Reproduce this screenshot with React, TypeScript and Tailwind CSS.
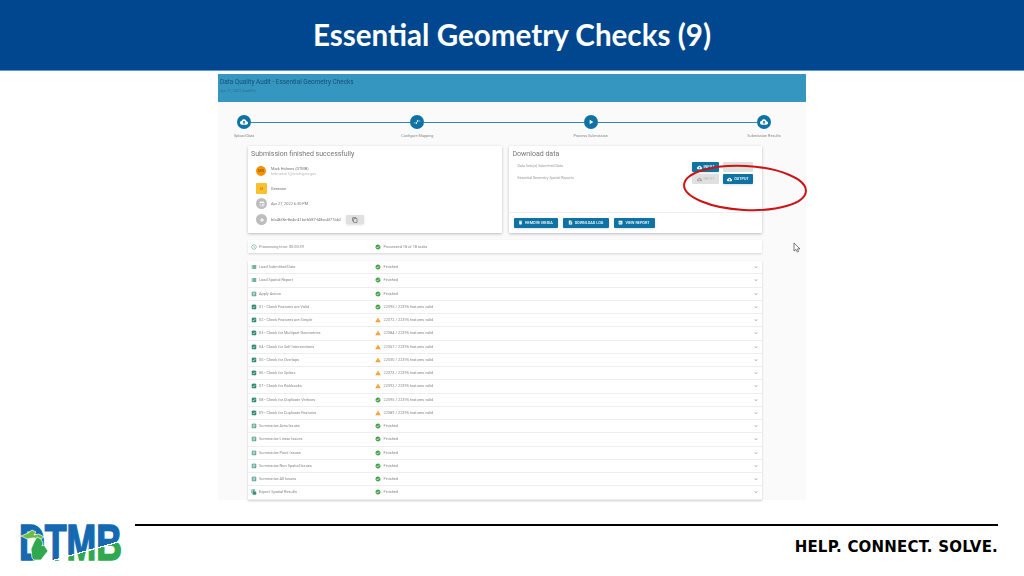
import type { ReactNode } from "react";
import {
  MdAssignment,
  MdAssignmentTurnedIn,
  MdCheckCircle,
  MdCloudUpload,
  MdContentCopy,
  MdDelete,
  MdDescription,
  MdEvent,
  MdExpandMore,
  MdFileCopy,
  MdPlayArrow,
  MdSchedule,
  MdTag,
  MdViewList,
  MdWarning,
  MdCompareArrows,
  MdAssessment,
} from "react-icons/md";

type Task = { name: string; kind: "load" | "check" | "sum" | "export"; status: string; warn?: boolean };

const tasks: Task[] = [
  { name: "Load Submitted Data", kind: "load", status: "Finished" },
  { name: "Load Spatial Report", kind: "load", status: "Finished" },
  { name: "Apply Action", kind: "sum", status: "Finished" },
  { name: "01 - Check Features are Valid", kind: "check", status: "22395 / 22395 features valid" },
  { name: "02 - Check Features are Simple", kind: "check", status: "22372 / 22395 features valid", warn: true },
  { name: "03 - Check for Multipart Geometries", kind: "check", status: "22384 / 22395 features valid", warn: true },
  { name: "04 - Check for Self Intersections", kind: "check", status: "22357 / 22395 features valid", warn: true },
  { name: "05 - Check for Overlaps", kind: "check", status: "22330 / 22395 features valid", warn: true },
  { name: "06 - Check for Spikes", kind: "check", status: "22373 / 22395 features valid", warn: true },
  { name: "07 - Check for Kickbacks", kind: "check", status: "22392 / 22395 features valid", warn: true },
  { name: "08 - Check for Duplicate Vertices", kind: "check", status: "22395 / 22395 features valid" },
  { name: "09 - Check for Duplicate Features", kind: "check", status: "22389 / 22395 features valid", warn: true },
  { name: "Summarize Area Issues", kind: "sum", status: "Finished" },
  { name: "Summarize Linear Issues", kind: "sum", status: "Finished" },
  { name: "Summarize Point Issues", kind: "sum", status: "Finished" },
  { name: "Summarize Non Spatial Issues", kind: "sum", status: "Finished" },
  { name: "Summarize All Issues", kind: "sum", status: "Finished" },
  { name: "Export Spatial Results", kind: "export", status: "Finished" },
];

const Step = ({ icon, label }: { icon: ReactNode; label: string }) => (
  <div className="flex w-[14px] shrink-0 flex-col items-center">
    <div className="flex h-[14px] w-[14px] items-center justify-center rounded-full bg-[#0e73a3] text-white">{icon}</div>
    <span className="mt-[4px] whitespace-nowrap text-[3.8px] leading-[6px] text-[#888]">{label}</span>
  </div>
);

const Line = () => <div className="mt-[6.5px] h-[1px] flex-1 bg-[#2a8ab5]" />;

const InfoRow = ({ icon, children, className }: { icon: ReactNode; children: ReactNode; className: string }) => (
  <div className={`flex items-center gap-[1px] pl-[8px] ${className}`}>
    <div className="w-[14px] shrink-0">{icon}</div>
    {children}
  </div>
);

const Btn = ({ icon, label, w }: { icon: ReactNode; label: string; w: string }) => (
  <div className={`flex h-[10px] items-center justify-center gap-[2px] rounded-[1px] bg-[#0e73a3] text-[3.8px] font-medium text-white shadow-sm ${w}`}>
    {icon}
    <span>{label}</span>
  </div>
);

const TaskIcon = ({ kind }: { kind: Task["kind"] }) => {
  if (kind === "load") return <MdViewList className="text-[6px] text-[#4a9a86]" />;
  if (kind === "check") return <MdAssignmentTurnedIn className="text-[6px] text-[#2f8a72]" />;
  if (kind === "export") return <MdFileCopy className="text-[6px] text-[#3f8f7c]" />;
  return <MdAssignment className="text-[6px] text-[#62a897]" />;
};

const Logo = () => (
  <svg width="104" height="40" viewBox="0 0 104 40" className="shrink-0 overflow-visible">
    <defs>
      {/* blue above the swoosh, green below; the stops are hard edges */}
      <linearGradient id="logoFill" gradientUnits="userSpaceOnUse" x1="42" y1="1.5" x2="44.1" y2="11.88">
        <stop offset="0" stopColor="#1469b0" />
        <stop offset="0" stopColor="#ffffff" />
        <stop offset="0.12" stopColor="#ffffff" />
        <stop offset="0.12" stopColor="#2fa84f" />
      </linearGradient>
    </defs>
    <text
      transform="translate(0 37.5) scale(0.713 1)"
      fontFamily="'Liberation Sans', sans-serif"
      fontWeight="700"
      fontSize="50"
      strokeWidth="1.6"
      fill="url(#logoFill)"
      stroke="url(#logoFill)"
    >
      DTMB
    </text>
    <path d="M2 14L9 11L13 8L17 10L15 13L20 12L25 15L22 17L14 16L8 17Z" fill="#6cbd45" stroke="#fff" strokeWidth="0.7" />
    <path d="M13 36L12 27L15 20L18 15L22 17L24 21L23 24L25 23L29 29L25 34L22 38L15 38Z" fill="#2fa84f" stroke="#fff" strokeWidth="0.7" />
  </svg>
);

export default function App() {
  return (
    <div className="relative flex h-[576px] w-[1024px] flex-col overflow-hidden bg-white font-['Roboto',sans-serif]">
      <header className="flex h-[71px] shrink-0 items-center justify-center border-b border-[#5b9bd5] bg-[#00478f]">
        <h1 className="font-['Lato',sans-serif] text-[29.6px] font-bold text-white">Essential Geometry Checks (9)</h1>
      </header>

      {/* pasted screenshot of the app */}
      <div className="relative ml-[218px] mt-[3px] h-[426px] w-[588px] shrink-0 bg-[#fafafa] blur-[0.4px]">
        <div className="h-[28px] bg-[#3596bf] pl-[2px] pt-[4px]">
          <p className="text-[6.4px] leading-[8px] text-[#14507a]">Data Quality Audit - Essential Geometry Checks</p>
          <p className="mt-[2px] text-[3.8px] leading-[5px] text-[#2a7098]">Apr 27, 2022 AuditFix</p>
        </div>

        <div className="flex pl-[19px] pr-[35px] pt-[13px]">
          <Step icon={<MdCloudUpload className="text-[8px]" />} label="Upload Data" />
          <Line />
          <Step icon={<MdCompareArrows className="text-[8px]" />} label="Configure Mapping" />
          <Line />
          <Step icon={<MdPlayArrow className="text-[8px]" />} label="Process Submission" />
          <Line />
          <Step icon={<MdCloudUpload className="text-[8px]" />} label="Submission Results" />
        </div>

        <div className="mt-[7px] flex gap-[7px] pl-[30px] pr-[44px]">
          <section className="h-[87px] flex-1 rounded-[1px] bg-white pt-[4px] shadow-[0_1px_3px_rgba(0,0,0,0.25)]">
            <h2 className="pl-[3px] text-[7px] leading-[9px] text-[#777]">Submission finished successfully</h2>
            <InfoRow className="mt-[7px]" icon={<div className="flex h-[10px] w-[10px] items-center justify-center rounded-full bg-[#f59300] text-[4px] text-[#7a4a00]">MD</div>}>
              <div className="text-[3.9px] leading-[5px]">
                <p className="text-[#777]">Mark Holmes (DTMB)</p>
                <p className="text-[#bbb]">holmesm1@michigan.gov</p>
              </div>
            </InfoRow>
            <InfoRow className="mt-[7px]" icon={<div className="flex h-[11px] w-[11px] items-center justify-center rounded-[1px] bg-[#fbc02d] text-[4px] text-[#8a6a00]">G</div>}>
              <span className="text-[3.9px] text-[#777]">Genesee</span>
            </InfoRow>
            <InfoRow className="mt-[4px]" icon={<div className="flex h-[11px] w-[11px] items-center justify-center rounded-full bg-[#bdbdbd] text-white"><MdEvent className="text-[6px]" /></div>}>
              <span className="text-[3.9px] text-[#777]">Apr 27, 2022 6:30 PM</span>
            </InfoRow>
            <InfoRow className="mt-[5px]" icon={<div className="flex h-[11px] w-[11px] items-center justify-center rounded-full bg-[#bdbdbd] text-white"><MdTag className="text-[6px]" /></div>}>
              <span className="text-[3.9px] text-[#777]">bfa46f8e-8e4c-41bc-b587-f48ec4f71bb2</span>
              <div className="ml-[4px] flex h-[9px] w-[18px] items-center justify-center rounded-[1px] bg-[#e0e0e0] text-[#444] shadow-sm">
                <MdContentCopy className="text-[6px]" />
              </div>
            </InfoRow>
          </section>

          <section className="flex h-[87px] flex-1 flex-col rounded-[1px] bg-white pt-[4px] shadow-[0_1px_3px_rgba(0,0,0,0.25)]">
            <h2 className="pl-[4px] text-[7px] leading-[9px] text-[#777]">Download data</h2>
            <div className="mt-[3px] flex items-center gap-[4px] pl-[9px] pr-[9px]">
              <span className="flex-1 text-[3.6px] text-[#999]">Data Sets(s) Submitted Data</span>
              <Btn icon={<MdCloudUpload className="text-[5px]" />} label="INPUT" w="w-[27px]" />
              <div className="h-[10px] w-[30px] rounded-[1px] bg-[#e0e0e0]" />
            </div>
            <div className="mt-[2px] flex items-center gap-[4px] pl-[9px] pr-[9px]">
              <span className="flex-1 text-[3.6px] text-[#999]">Essential Geometry Spatial Reports</span>
              <div className="flex h-[10px] w-[27px] items-center justify-center gap-[2px] rounded-[1px] bg-[#e0e0e0] text-[3.8px] text-[#bbb]">
                <MdCloudUpload className="text-[5px] text-[#aaa]" />
                <span>INPUT</span>
              </div>
              <Btn icon={<MdCloudUpload className="text-[5px]" />} label="OUTPUT" w="w-[30px]" />
            </div>
            <div className="mt-auto flex h-[21px] items-center gap-[5px] border-t border-[#eeeeee] pb-[1px] pl-[5px]">
              <Btn icon={<MdDelete className="text-[5px]" />} label="REMOVE MEDIA" w="w-[44px]" />
              <Btn icon={<MdDescription className="text-[5px]" />} label="DOWNLOAD LOG" w="w-[46px]" />
              <Btn icon={<MdAssessment className="text-[5px]" />} label="VIEW REPORT" w="w-[41px]" />
            </div>
          </section>
        </div>

        <div className="ml-[30px] mr-[44px] mt-[7px] flex h-[13px] items-center bg-white text-[3.9px] text-[#888] shadow-[0_1px_2px_rgba(0,0,0,0.15)]">
          <div className="flex w-[127px] items-center gap-[2px] pl-[3px]">
            <MdSchedule className="text-[6px] text-[#4a9a86]" />
            <span>Processing time: 00:00:39</span>
          </div>
          <MdCheckCircle className="text-[6px] text-[#43a047]" />
          <span className="ml-[2.5px]">Processed 18 of 18 tasks</span>
        </div>

        <div className="ml-[30px] mr-[44px] mt-[8px] bg-white shadow-[0_1px_2px_rgba(0,0,0,0.2)]">
          {tasks.map((t) => (
            <div key={t.name} className="flex h-[13.25px] items-center border-b border-[#eeeeee] text-[3.9px] text-[#888]">
              <div className="flex w-[127px] items-center gap-[2px] pl-[3px]">
                <TaskIcon kind={t.kind} />
                <span>{t.name}</span>
              </div>
              {t.warn ? <MdWarning className="text-[6px] text-[#f39c2c]" /> : <MdCheckCircle className="text-[6px] text-[#43a047]" />}
              <span className="ml-[2.5px] flex-1">{t.status}</span>
              <MdExpandMore className="mr-[3px] text-[6px] text-[#888]" />
            </div>
          ))}
        </div>

        {/* cursor */}
        <svg width="8" height="11" viewBox="0 0 8 11" className="absolute left-[575px] top-[168px]">
          <path d="M1 1V9L3 7.4L4.3 10L5.6 9.4L4.4 6.9H7Z" fill="#fff" stroke="#444" strokeWidth="0.7" />
        </svg>
      </div>

      {/* red annotation */}
      <svg width="130" height="54" viewBox="0 0 130 54" className="absolute left-[680px] top-[161px]">
        <ellipse cx="65" cy="27" rx="61" ry="22" transform="rotate(3 65 27)" fill="none" stroke="#cc1414" strokeWidth="2" />
      </svg>

      <footer className="flex flex-1 items-start pl-[19px] pr-[26px] pt-[22px]">
        <Logo />
        <div className="ml-[12px] flex flex-1 flex-col items-end pt-[2px]">
          <div className="h-[2px] w-full bg-black" />
          <p className="mt-[12px] font-['DejaVu_Sans',sans-serif] text-[15px] font-bold leading-[18px] tracking-[0.2px] text-black">HELP. CONNECT. SOLVE.</p>
        </div>
      </footer>
    </div>
  );
}
